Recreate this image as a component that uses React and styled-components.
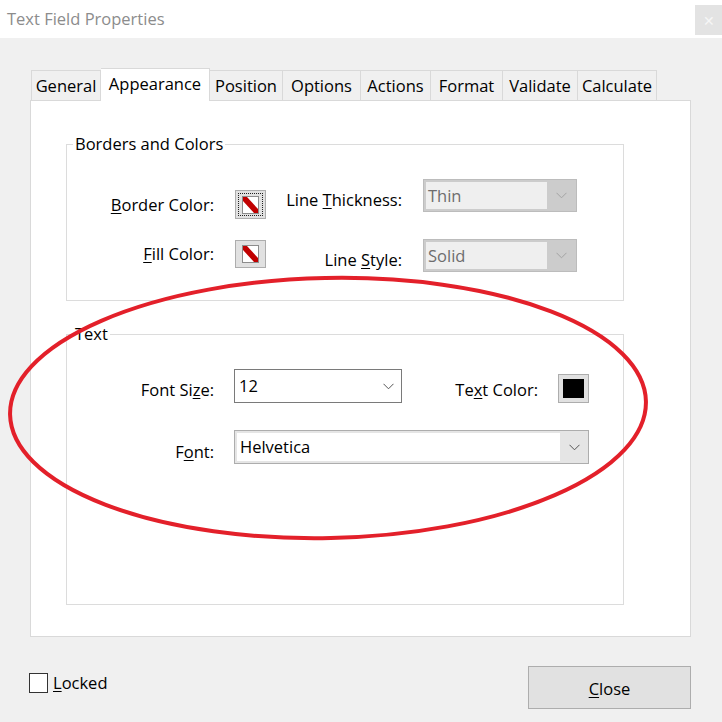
import React from "react";
import styled, { createGlobalStyle } from "styled-components";

const GlobalStyle = createGlobalStyle`
  html, body {
    margin: 0;
    padding: 0;
    background: #f0f0f0;
  }
  body {
    font-family: "Open Sans", "Noto Sans", Arial, sans-serif;
    font-size: 16.5px;
    color: #000;
  }
`;

const Window = styled.div`
  position: relative;
  width: 722px;
  height: 722px;
  overflow: hidden;
  background: #f0f0f0;
  display: flex;
  flex-direction: column;
`;

const TitleBar = styled.div`
  height: 38px;
  flex-shrink: 0;
  background: #fff;
  display: flex;
  align-items: center;
  justify-content: space-between;
  padding-left: 7px;
  box-sizing: border-box;
`;

const Title = styled.span`
  color: #8c8c8c;
  margin-top: -1px;
`;

const CloseBox = styled.div`
  align-self: flex-start;
  margin-top: 5px;
  width: 27px;
  height: 30px;
  background: #e3e3e3;
  color: #f6f6f6;
  font-size: 14px;
  display: flex;
  align-items: center;
  justify-content: center;
`;

const Body = styled.div`
  padding: 30px 0 0 30px;
`;

const TabRow = styled.div`
  position: relative;
  z-index: 1;
  display: flex;
  align-items: flex-end;
  height: 32px;
  margin-left: 1px;
`;

const Tab = styled.div`
  box-sizing: border-box;
  width: ${(p) => p.w}px;
  height: ${(p) => (p.active ? 33 : 30)}px;
  margin-bottom: ${(p) => (p.active ? -1 : 0)}px;
  background: ${(p) => (p.active ? "#fff" : "#f0f0f0")};
  border: 1px solid #d9d9d9;
  border-bottom: none;
  border-left: ${(p) => (p.first ? "1px solid #d9d9d9" : "none")};
  display: flex;
  align-items: center;
  justify-content: center;
  padding-bottom: ${(p) => (p.active ? 3 : 0)}px;
  white-space: nowrap;
`;

const Panel = styled.div`
  box-sizing: border-box;
  width: 661px;
  height: 537px;
  background: #fff;
  border: 1px solid #d9d9d9;
  padding-top: 33px;
`;

const Group = styled.fieldset`
  box-sizing: border-box;
  margin: ${(p) => p.top || 0}px 0 0 35px;
  width: 558px;
  height: ${(p) => p.h}px;
  min-width: 0;
  border: 1px solid #dcdcdc;
  padding: 25px 0 0 0;
`;

const Legend = styled.legend`
  margin-left: 6px;
  padding: 0 2px;
  line-height: 20px;
`;

const BordersGrid = styled.div`
  display: grid;
  grid-template-columns: 147px 31px 115px 154px;
  grid-template-rows: 40px 33px;
  column-gap: 21px;
  row-gap: 20px;
`;

const TextGrid = styled.div`
  display: grid;
  grid-template-columns: 147px 168px 116px 31px;
  grid-template-rows: 34px 34px;
  column-gap: 20px;
  row-gap: 27px;
`;

const Label = styled.span`
  justify-self: end;
  align-self: start;
  margin-top: ${(p) => p.dy || 0}px;
  line-height: 22px;
  white-space: nowrap;
`;

const Key = styled.span`
  text-decoration: underline;
  text-underline-offset: 2px;
  text-decoration-thickness: 1px;
`;

const Swatch = styled.div`
  box-sizing: border-box;
  align-self: start;
  margin-top: ${(p) => p.dy || 0}px;
  width: 31px;
  height: ${(p) => p.h}px;
  padding: 2px;
  border: 1px solid #adadad;
  background: #e1e1e1;
  display: flex;
`;

const FocusRing = styled.div`
  flex: 1;
  border: 1px dotted ${(p) => (p.on ? "#222" : "transparent")};
  display: flex;
  align-items: center;
  justify-content: center;
`;

const Chip = styled.div`
  box-sizing: border-box;
  width: ${(p) => p.w}px;
  height: ${(p) => p.h}px;
  background: ${(p) => p.bg};
  border: ${(p) => (p.framed ? "1px solid #8c8c8c" : "none")};
  display: flex;
  overflow: hidden;
`;

const Select = styled.div`
  box-sizing: border-box;
  align-self: start;
  grid-column: ${(p) => p.span || "auto"};
  height: ${(p) => p.h || 33}px;
  border: 1px solid ${(p) => p.line};
  background: ${(p) => p.bg};
  display: flex;
  padding: ${(p) => (p.inset ? "2px 0 2px 2px" : "0")};
`;

const SelectText = styled.div`
  flex: 1;
  display: flex;
  align-items: center;
  padding-left: ${(p) => p.pl || 3}px;
  background: ${(p) => p.bg || "transparent"};
  color: ${(p) => p.color || "#000"};
  line-height: 20px;
`;

const Arrow = styled.div`
  width: ${(p) => p.w || 28}px;
  display: flex;
  align-items: center;
  justify-content: center;
`;

const Footer = styled.div`
  display: flex;
  justify-content: space-between;
  align-items: flex-start;
  width: 661px;
  margin-top: 29px;
`;

const CheckRow = styled.label`
  display: flex;
  align-items: center;
  margin-top: 5px;
  margin-left: -1px;
  gap: 5px;
`;

const CheckBox = styled.span`
  box-sizing: border-box;
  width: 19px;
  height: 20px;
  border: 1px solid #333;
  background: #fff;
`;

const Button = styled.div`
  box-sizing: border-box;
  width: 163px;
  height: 43px;
  border: 1px solid #adadad;
  background: #e1e1e1;
  display: flex;
  align-items: center;
  justify-content: center;
  padding-top: 2px;
`;

const Overlay = styled.svg`
  position: absolute;
  left: 0;
  top: 0;
  pointer-events: none;
`;

function Chevron({ color = "#555" }) {
  return (
    <svg width="11" height="7" viewBox="0 0 11 7">
      <polyline points="0.5,0.8 5.5,5.8 10.5,0.8" fill="none" stroke={color} strokeWidth="1" />
    </svg>
  );
}

function NoColor() {
  return (
    <svg width="15" height="16" viewBox="0 0 15 16">
      <polygon points="0,0 4,0 15,12 15,16 11,16 0,4" fill="#c00000" />
    </svg>
  );
}

const tabs = [
  ["General", 70],
  ["Appearance", 109],
  ["Position", 73],
  ["Options", 78],
  ["Actions", 70],
  ["Format", 72],
  ["Validate", 75],
  ["Calculate", 79],
];

export default function App() {
  return (
    <Window>
      <GlobalStyle />
      <TitleBar>
        <Title>Text Field Properties</Title>
        <CloseBox>✕</CloseBox>
      </TitleBar>
      <Body>
        <TabRow>
          {tabs.map(([name, w], i) => (
            <Tab key={name} w={w} first={i === 0} active={name === "Appearance"}>
              {name}
            </Tab>
          ))}
        </TabRow>
        <Panel>
          <Group h={167}>
            <Legend>Borders and Colors</Legend>
            <BordersGrid>
              <Label dy={15}>
                <Key>B</Key>order Color:
              </Label>
              <Swatch dy={11} h={29}>
                <FocusRing on>
                  <Chip w={17} h={18} bg="#fff" framed>
                    <NoColor />
                  </Chip>
                </FocusRing>
              </Swatch>
              <Label dy={10}>
                Line <Key>T</Key>hickness:
              </Label>
              <Select line="#bcbcbc" bg="#cccccc" inset>
                <SelectText bg="#efefef" color="#6d6d6d" pl={2}>
                  Thin
                </SelectText>
                <Arrow w={29}>
                  <Chevron color="#a3a3a3" />
                </Arrow>
              </Select>

              <Label dy={4}>
                <Key>F</Key>ill Color:
              </Label>
              <Swatch dy={1} h={28}>
                <FocusRing>
                  <Chip w={17} h={18} bg="#fff" framed>
                    <NoColor />
                  </Chip>
                </FocusRing>
              </Swatch>
              <Label dy={10}>
                Line <Key>S</Key>tyle:
              </Label>
              <Select line="#bcbcbc" bg="#cccccc" inset>
                <SelectText bg="#efefef" color="#6d6d6d" pl={2}>
                  Solid
                </SelectText>
                <Arrow w={29}>
                  <Chevron color="#a3a3a3" />
                </Arrow>
              </Select>
            </BordersGrid>
          </Group>

          <Group top={23} h={281}>
            <Legend>Text</Legend>
            <TextGrid>
              <Label dy={10}>
                Font Si<Key>z</Key>e:
              </Label>
              <Select h={34} line="#7a7a7a" bg="#fff">
                <SelectText pl={4}>12</SelectText>
                <Arrow w={26}>
                  <Chevron />
                </Arrow>
              </Select>
              <Label dy={10}>
                Te<Key>x</Key>t Color:
              </Label>
              <Swatch dy={5} h={29}>
                <FocusRing>
                  <Chip w={21} h={19} bg="#000" />
                </FocusRing>
              </Swatch>

              <Label dy={11}>
                F<Key>o</Key>nt:
              </Label>
              <Select h={34} span="2 / 5" line="#adadad" bg="#e5e5e5" inset>
                <SelectText bg="#fff" pl={3}>
                  Helvetica
                </SelectText>
                <Arrow w={28}>
                  <Chevron />
                </Arrow>
              </Select>
            </TextGrid>
          </Group>
        </Panel>
        <Footer>
          <CheckRow>
            <CheckBox />
            <span>
              <Key>L</Key>ocked
            </span>
          </CheckRow>
          <Button>
            <span>
              <Key>C</Key>lose
            </span>
          </Button>
        </Footer>
      </Body>
      <Overlay width="722" height="722" viewBox="0 0 722 722">
        <ellipse
          cx="328"
          cy="408"
          rx="318"
          ry="130"
          transform="rotate(-1.2 328 408)"
          fill="none"
          stroke="#e3202a"
          strokeWidth="4"
        />
      </Overlay>
    </Window>
  );
}
